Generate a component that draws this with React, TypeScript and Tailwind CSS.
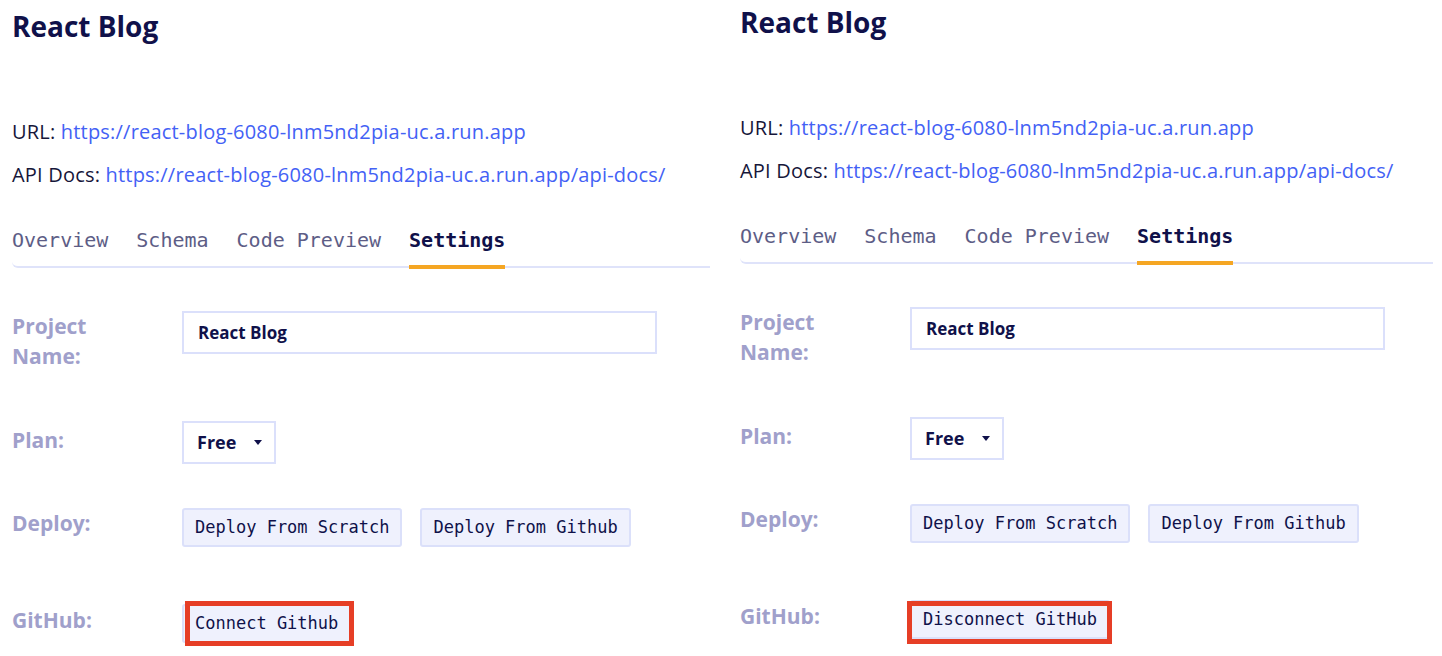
const sans = "font-['Open_Sans','Noto_Sans',sans-serif]";
const mono = "font-['DejaVu_Sans_Mono','Liberation_Mono',monospace]";

const url = "https://react-blog-6080-lnm5nd2pia-uc.a.run.app";

const tabs = ["Overview", "Schema", "Code Preview", "Settings"];

type PanelProps = {
  shift: string;
  githubLabel: string;
  redBox: string;
};

export default function App() {
  return (
    <div className={`flex w-[1442px] h-[656px] overflow-hidden bg-white ${sans}`}>
      <div className="w-[728px] pl-3 pr-[18px]">
        <Panel
          shift="pt-[9px]"
          githubLabel="Connect Github"
          redBox="left-[3px] top-[-3px] w-[169px] h-[45px]"
        />
      </div>
      <div className="flex-1 pl-3 pr-[9px]">
        <Panel
          shift="pt-[5px]"
          githubLabel="Disconnect GitHub"
          redBox="left-[-3px] top-[1px] w-[205px] h-[43px]"
        />
      </div>
    </div>
  );
}

function Panel(props: PanelProps) {
  return (
    <div className={props.shift}>
      <h1 className="text-[28px] leading-[34px] font-bold text-[#10114a]">React Blog</h1>

      <div className="mt-[67px] text-[20px] leading-[43px] tracking-[0.2px] text-[#16163a]">
        <p>
          URL: <a className="text-[#4361f5]">{url}</a>
        </p>
        <p>
          API Docs: <a className="text-[#4361f5]">{url}/api-docs/</a>
        </p>
      </div>

      <div className="mt-[18px] flex h-[54px] gap-[28px] rounded-bl-md border-b-2 border-[#dfe3fa]">
        {tabs.map((tab) => (
          <div
            key={tab}
            className={`relative flex items-center text-[20px] ${mono} ${
              tab === "Settings" ? "font-bold text-[#10114a]" : "text-[#5d5d86]"
            }`}
          >
            {tab}
            {tab === "Settings" && (
              <span className="absolute left-0 right-0 -bottom-[3px] h-1 bg-[#f5a623]" />
            )}
          </div>
        ))}
      </div>

      <div className="mt-[43px] flex items-start">
        <Label>
          Project
          <br />
          Name:
        </Label>
        <div className="flex h-[43px] w-[475px] items-center border-2 border-[#dbe0fb] px-[14px] text-[17px] font-bold text-[#10114a]">
          React Blog
        </div>
      </div>

      <div className="mt-[50px] flex items-start">
        <Label className="mt-[4px]">Plan:</Label>
        <div className="flex h-[43px] w-[94px] items-center border-2 border-[#dbe0fb] pl-[13px] text-[18px] font-bold text-[#10114a]">
          Free
          <svg className="ml-[18px]" width="8" height="5" viewBox="0 0 8 5">
            <path d="M0 0h8L4 5z" fill="#10114a" />
          </svg>
        </div>
      </div>

      <div className="mt-[44px] flex items-start">
        <Label>Deploy:</Label>
        <div className="flex gap-[18px]">
          <Button>Deploy From Scratch</Button>
          <Button>Deploy From Github</Button>
        </div>
      </div>

      <div className="mt-[57px] flex items-start">
        <Label className="mt-[1px]">GitHub:</Label>
        <div className="relative">
          <Button>{props.githubLabel}</Button>
          <span className={`absolute border-[5px] border-[#e63e26] ${props.redBox}`} />
        </div>
      </div>
    </div>
  );
}

function Label(props: { children: React.ReactNode; className?: string }) {
  return (
    <div className={`w-[170px] shrink-0 text-[21px] leading-[30px] font-bold text-[#a0a0cb] ${props.className ?? ""}`}>
      {props.children}
    </div>
  );
}

function Button(props: { children: React.ReactNode }) {
  return (
    <button
      className={`h-[39px] rounded-[3px] border-2 border-[#dbe0fa] bg-[#eff1fd] px-[11px] text-[17px] text-[#10114a] ${mono}`}
    >
      {props.children}
    </button>
  );
}
